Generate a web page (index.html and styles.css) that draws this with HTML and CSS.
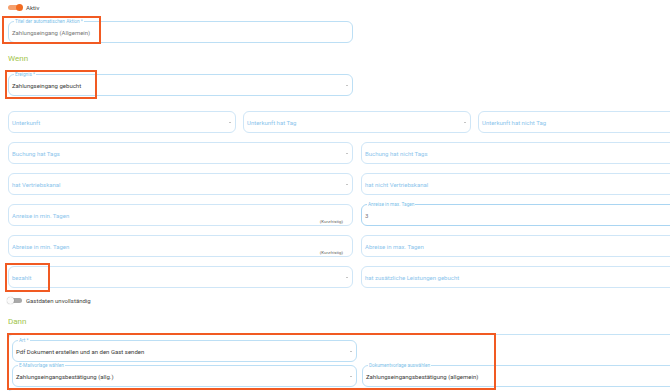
FILE: index.html
```html
<!DOCTYPE html>
<html lang="de">
<head>
<meta charset="utf-8">
<title>Automatische Aktion</title>
<link rel="stylesheet" href="styles.css">
</head>
<body>
<div class="page">
  <div class="toggle-row">
    <span class="switch on"><span class="knob"></span></span>
    <span class="toggle-label">Aktiv</span>
  </div>

  <div class="grid2 title-row">
    <div class="field filled">
      <span class="flabel">Titel der automatischen Aktion *</span>
      <span class="value muted">Zahlungseingang (Allgemein)</span>
      <span class="hl hl-title"></span>
    </div>
  </div>

  <h2 class="section">Wenn</h2>

  <div class="grid2">
    <div class="field filled select">
      <span class="flabel">Ereignis *</span>
      <span class="value">Zahlungseingang gebucht</span>
      <span class="arrow"></span>
      <span class="hl hl-event"></span>
    </div>
  </div>

  <div class="rows">
    <div class="grid3">
      <div class="field select"><span class="ph">Unterkunft</span><span class="arrow"></span></div>
      <div class="field select"><span class="ph">Unterkunft hat Tag</span><span class="arrow"></span></div>
      <div class="field"><span class="ph">Unterkunft hat nicht Tag</span></div>
    </div>
    <div class="grid2">
      <div class="field select"><span class="ph">Buchung hat Tags</span><span class="arrow"></span></div>
      <div class="field"><span class="ph">Buchung hat nicht Tags</span></div>
    </div>
    <div class="grid2">
      <div class="field select"><span class="ph">hat Vertriebskanal</span><span class="arrow"></span></div>
      <div class="field"><span class="ph">hat nicht Vertriebskanal</span></div>
    </div>
    <div class="grid2">
      <div class="field"><span class="ph">Anreise in min. Tagen</span><span class="helper">(Kurzfristig)</span></div>
      <div class="field filled strong">
        <span class="flabel">Anreise in max. Tagen</span>
        <span class="value muted">3</span>
      </div>
    </div>
    <div class="grid2">
      <div class="field"><span class="ph">Abreise in min. Tagen</span><span class="helper">(Kurzfristig)</span></div>
      <div class="field"><span class="ph">Abreise in max. Tagen</span></div>
    </div>
    <div class="grid2">
      <div class="field select">
        <span class="ph">bezahlt</span><span class="arrow"></span>
        <span class="hl hl-paid"></span>
      </div>
      <div class="field"><span class="ph">hat zusätzliche Leistungen gebucht</span></div>
    </div>
  </div>

  <div class="toggle-row guest">
    <span class="switch off"><span class="knob"></span></span>
    <span class="toggle-label">Gastdaten unvollständig</span>
  </div>

  <h2 class="section then">Dann</h2>

  <div class="card">
    <span class="hl hl-then"></span>
    <div class="card-grid">
      <div class="field filled select">
        <span class="flabel">Art *</span>
        <span class="value">Pdf Dokument erstellen und an den Gast senden</span>
        <span class="arrow"></span>
      </div>
      <div class="empty"></div>
      <div class="field filled select">
        <span class="flabel">E-Mailvorlage wählen</span>
        <span class="value">Zahlungseingangsbestätigung (allg.)</span>
        <span class="arrow"></span>
      </div>
      <div class="field filled">
        <span class="flabel">Dokumentvorlage auswählen</span>
        <span class="value">Zahlungseingangsbestätigung (allgemein)</span>
      </div>
    </div>
  </div>
</div>
</body>
</html>
```

FILE: styles.css
```css
* { box-sizing: border-box; }

html, body {
  margin: 0;
  padding: 0;
  background: #ffffff;
  overflow: hidden;
}

body {
  font-family: Roboto, "Liberation Sans", sans-serif;
  color: #333333;
}

.page {
  width: 703px;
  margin-left: 8px;
}

/* toggles */
.toggle-row {
  height: 14px;
  display: flex;
  align-items: center;
  gap: 4px;
}

.toggle-row.guest {
  margin-top: 5px;
}

.switch {
  position: relative;
  width: 14px;
  height: 5px;
  border-radius: 3px;
  display: inline-block;
}

.switch.on { background: #f6a06e; }
.switch.off { background: #a9a9a9; }

.knob {
  position: absolute;
  top: -1px;
  width: 7px;
  height: 7px;
  border-radius: 50%;
}

.switch.on .knob {
  right: -1px;
  background: #f26b21;
}

.switch.off .knob {
  left: -1px;
  background: #fafafa;
  box-shadow: 0 0 1px rgba(0,0,0,0.45);
}

.toggle-label {
  font-size: 6px;
  color: #444444;
}

/* grids */
.grid2 {
  display: grid;
  grid-template-columns: 345px 345px;
  column-gap: 8px;
}

.grid3 {
  display: grid;
  grid-template-columns: 228px 228px 228px;
  column-gap: 7px;
}

.title-row { margin-top: 7px; }

.rows {
  margin-top: 15px;
  display: flex;
  flex-direction: column;
  gap: 9px;
}

/* section headings */
.section {
  margin: 11px 0 10px;
  height: 10px;
  line-height: 10px;
  font-size: 8px;
  font-weight: 400;
  color: #9fc54a;
}

.section.then {
  margin: 10px 0 7px;
}

/* fields */
.field {
  position: relative;
  height: 22px;
  border: 1px solid #cfe6f7;
  border-radius: 6px;
  display: flex;
  align-items: center;
  padding: 0 3px;
  font-size: 6px;
}

.field.filled { border-color: #bcdff5; }
.field.strong { border-color: #a9d5f2; }

.flabel {
  position: absolute;
  top: -3px;
  left: 5px;
  padding: 0 1px;
  background: #ffffff;
  font-size: 4.75px;
  line-height: 5px;
  color: #7ebfe9;
}

.value {
  color: #3a3a3a;
  padding-top: 1px;
}

.value.muted { color: #777777; }

.ph {
  color: #8cc5ec;
  padding-top: 1px;
}

.arrow {
  margin-left: auto;
  margin-right: 1px;
  width: 0;
  height: 0;
  border-left: 1.5px solid transparent;
  border-right: 1.5px solid transparent;
  border-top: 1.5px solid #8a8a8a;
}

.helper {
  margin-left: auto;
  margin-right: 6px;
  align-self: flex-end;
  font-size: 4.4px;
  line-height: 6px;
  color: #666666;
}

/* Dann card */
.card {
  position: relative;
  border: 1px solid #c5e3f6;
  border-radius: 4px;
  padding: 5px 3px 4px;
  width: 703px;
}

.card-grid {
  display: grid;
  grid-template-columns: 345px 345px;
  column-gap: 5px;
  row-gap: 3px;
}

/* orange annotation boxes */
.hl {
  position: absolute;
  border: 2px solid #f15a22;
  pointer-events: none;
}

.hl-title { left: -7px; top: -6px; width: 99px; height: 28px; }
.hl-event { left: -4px; top: -5px; width: 92px; height: 29px; }
.hl-paid { left: -4px; top: -4px; width: 45px; height: 29px; }
.hl-then { left: -2px; top: -2px; width: 489px; height: 57px; z-index: 2; }
```
